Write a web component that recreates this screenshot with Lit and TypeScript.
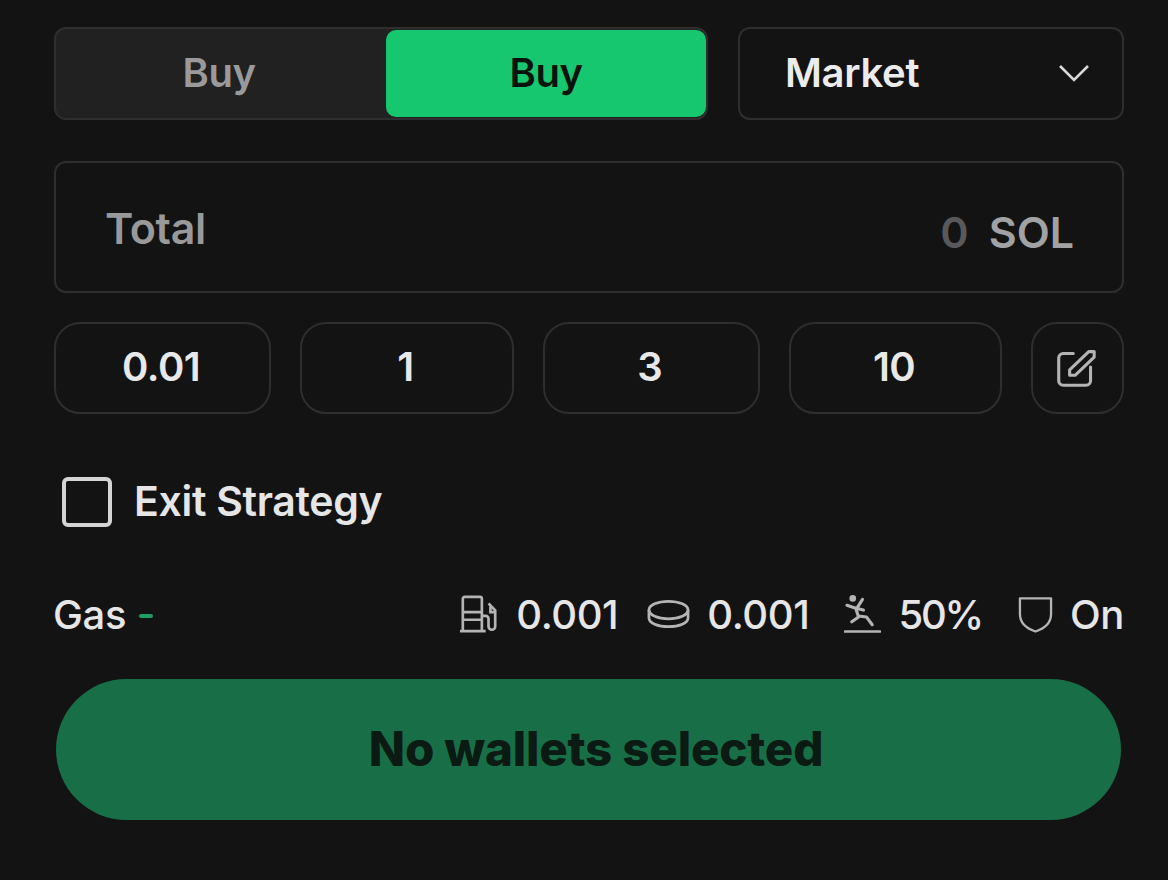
import { LitElement, html, css } from "lit";
import { customElement } from "lit/decorators.js";

@customElement("app-root")
export class AppRoot extends LitElement {
  static styles = css`
    :host { display: block; height: 880px; background: #131314; font-family: Inter, "Liberation Sans", sans-serif; color: #eceded; overflow: hidden; }
    .page { box-sizing: border-box; height: 880px; padding: 27px 44px 0 54px; display: flex; flex-direction: column; }
    .top { display: flex; gap: 30px; height: 93px; }
    .seg { box-sizing: border-box; width: 654px; display: flex; background: #212122; border: 2px solid #2e2e2f; border-radius: 12px; }
    .tab { display: flex; align-items: center; justify-content: center; font-size: 40px; font-weight: 600; letter-spacing: -0.5px; padding-bottom: 3px; }
    .tab.off { box-sizing: border-box; width: 330px; color: #9a9a9c; padding-right: 4px; }
    .tab.on { flex: 1; background: #16c76f; color: #07130c; border-radius: 10px; margin: 1px 0 1px 0; }
    .market { box-sizing: border-box; flex: 1; border: 2px solid #2e2e30; border-radius: 12px; display: flex; align-items: center; justify-content: space-between; padding: 0 32px 2px 45px; font-size: 40px; font-weight: 600; letter-spacing: -0.3px; color: #ececec; }
    .market svg { width: 32px; height: 20px; }
    .total { box-sizing: border-box; margin-top: 41px; height: 132px; border: 2px solid #2e2e30; border-radius: 12px; display: flex; align-items: center; justify-content: space-between; padding: 0 48px 0 49px; font-size: 43px; font-weight: 600; }
    .total .l { color: #99999b; margin-top: 1px; letter-spacing: -0.3px; }
    .total .r { color: #a2a2a4; margin-top: 9px; display: flex; gap: 20px; }
    .total .z { color: #59595b; }
    .presets { margin-top: 29px; height: 92px; display: flex; gap: 29px; }
    .p { box-sizing: border-box; border: 2px solid #2e2e30; border-radius: 26px; display: flex; align-items: center; justify-content: center; font-size: 40px; font-weight: 600; color: #e8e8e8; letter-spacing: -0.5px; padding: 0 3px 3px 0; }
    .p.a { width: 218px; } .p.b { width: 214px; }
    .p.e { width: 93px; color: #b4b4b4; padding: 0 4px 0 0; }
    .p.e svg { width: 40px; height: 40px; }
    .exit { margin: 63px 0 0 8px; height: 50px; display: flex; align-items: center; gap: 22px; font-size: 41px; font-weight: 600; letter-spacing: -0.3px; color: #e6e6e7; }
    .exit span { margin-top: -2px; }
    .box { box-sizing: border-box; width: 50px; height: 50px; border: 4px solid #d4d4d4; border-radius: 6px; }
    .gas { margin-top: 62px; height: 52px; display: flex; align-items: center; justify-content: space-between; font-size: 40px; font-weight: 500; color: #e6e6e7; padding-bottom: 2px; box-sizing: border-box; }
    .gas .g { letter-spacing: -0.3px; display: flex; align-items: center; gap: 13px; margin-left: -1px; }
    .dash { width: 14px; height: 4px; margin-top: 3px; background: #1f9d63; border-radius: 2px; }
    .stats { display: flex; align-items: center; letter-spacing: -0.4px; }
    .stat { display: flex; align-items: center; }
    .stat svg { display: block; color: #b4b4b4; margin-right: 17px; }
    .pct { letter-spacing: -2.2px; }
    .s2 { margin-left: 29px; } .s3 { margin-left: 35px; } .s4 { margin-left: 36px; }
    .cta { margin: 38px 3px 0 2px; height: 141px; border-radius: 71px; background: #186f47; display: flex; align-items: center; justify-content: center; font-size: 47.5px; font-weight: 800; color: #0b1a12; letter-spacing: -0.2px; padding: 0 0 2px 15px; box-sizing: border-box; }
  `;

  render() {
    return html`<div class="page">
      <div class="top">
        <div class="seg"><div class="tab off">Buy</div><div class="tab on">Buy</div></div>
        <div class="market">Market
          <svg viewBox="0 0 32 20" fill="none" stroke="#d8d8d8" stroke-width="2.6"><path d="M2 3l14 14L30 3"/></svg>
        </div>
      </div>
      <div class="total"><span class="l">Total</span><span class="r"><span class="z">0</span><span>SOL</span></span></div>
      <div class="presets">
        <div class="p a">0.01</div><div class="p b">1</div><div class="p a">3</div><div class="p b">10</div>
        <div class="p e"><svg viewBox="0 0 44 44" fill="none" stroke="currentColor" stroke-width="3.4" stroke-linecap="round" stroke-linejoin="round">
          <path d="M19 6H8a5 5 0 0 0-5 5v25a5 5 0 0 0 5 5h25a5 5 0 0 0 5-5V21"/>
          <path d="M15 30V24L36 4l6 0 0 6L21 30z"/>
        </svg></div>
      </div>
      <div class="exit"><div class="box"></div><span>Exit Strategy</span></div>
      <div class="gas">
        <span class="g">Gas<span class="dash"></span></span>
        <div class="stats">
          <div class="stat"><svg width="40" height="40" viewBox="0 0 42 40" fill="none" stroke="currentColor" stroke-width="2.8"><path d="M4 38V4a2 2 0 0 1 2-2h16a2 2 0 0 1 2 2v34M1 38h27M4 18h20M4 26h20"/><path d="M24 22h4a3 3 0 0 1 3 3v8a3 3 0 0 0 7 0V16l-7-7"/><path d="M33 12v6h5"/></svg>0.001</div>
          <div class="stat s2"><svg width="43" height="30" viewBox="0 0 44 30" fill="none" stroke="currentColor" stroke-width="2.8"><ellipse cx="22" cy="11" rx="20" ry="9"/><path d="M2 11v8c0 5 9 9 20 9s20-4 20-9v-8"/></svg>0.001</div>
          <div class="stat s3"><svg width="37" height="40" viewBox="0 0 38 40" fill="none" stroke="currentColor" stroke-width="3.2" stroke-linecap="round" stroke-linejoin="round"><circle cx="9" cy="4" r="3.4" fill="currentColor" stroke="none"/><path d="M3 11l9 3 8 2M12 14l3 9-7 5M15 22l8 1 6 8M14 13l5-8"/><path d="M1 38h36" stroke-width="2.6"/></svg><span class="pct">50%</span></div>
          <div class="stat s4"><svg width="35" height="40" viewBox="0 0 36 40" fill="none" stroke="currentColor" stroke-width="2.4" stroke-linejoin="round"><path d="M2 4h32v16c0 9-7 15-16 18C9 35 2 29 2 20z"/></svg>On</div>
        </div>
      </div>
      <div class="cta">No wallets selected</div>
    </div>`;
  }
}
